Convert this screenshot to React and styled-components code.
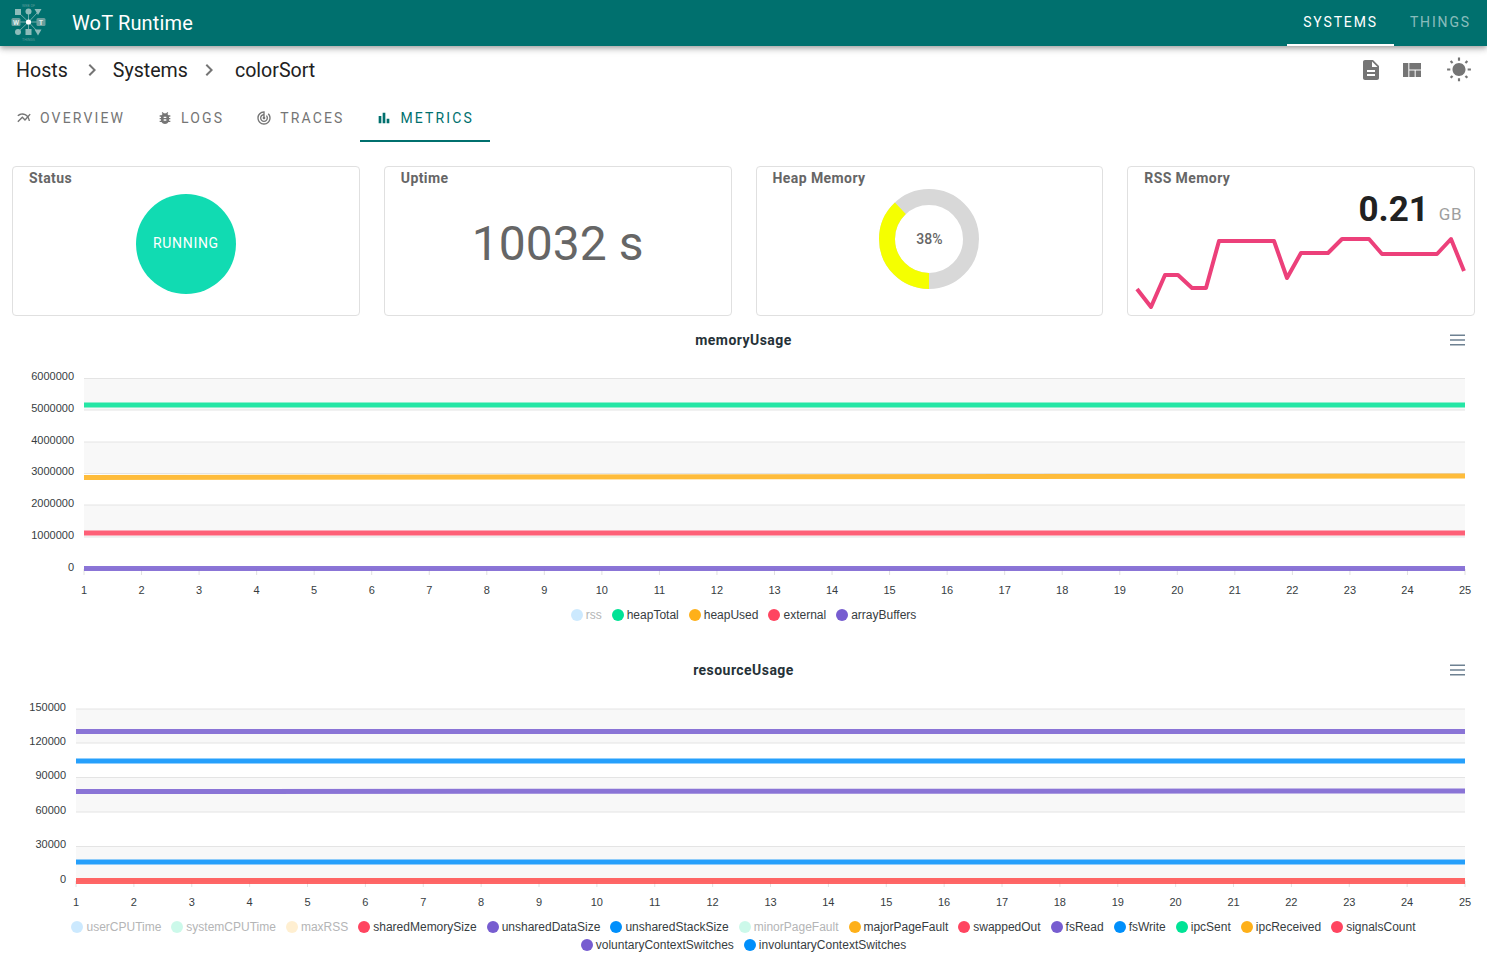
import React from 'react';
import styled, { createGlobalStyle } from 'styled-components';
import {
  MdBarChart,
  MdBugReport,
  MdChevronRight,
  MdDescription,
  MdMultilineChart,
  MdTrackChanges,
  MdViewQuilt,
  MdWbSunny,
} from 'react-icons/md';

const PURPLE = '#775DD0';
const BLUE = '#008FFB';
const GREEN = '#00E396';
const ORANGE = '#FEB019';
const RED = '#FF4560';

const memoryChart = {
  title: 'memoryUsage',
  top: 356,
  height: 246,
  left: 84,
  right: 1465,
  labelY: 594,
  grid: [
    { label: '6000000', y: 378.5 },
    { label: '5000000', y: 410 },
    { label: '4000000', y: 442 },
    { label: '3000000', y: 473.5 },
    { label: '2000000', y: 505 },
    { label: '1000000', y: 537 },
    { label: '0', y: 569 },
  ],
  series: [
    { color: GREEN, y1: 405, y2: 405 },
    { color: ORANGE, y1: 477.5, y2: 476 },
    { color: RED, y1: 533, y2: 533 },
    { color: PURPLE, y1: 568.5, y2: 568.5 },
  ],
  legend: [
    { name: 'rss', color: BLUE, off: true },
    { name: 'heapTotal', color: GREEN },
    { name: 'heapUsed', color: ORANGE },
    { name: 'external', color: RED },
    { name: 'arrayBuffers', color: PURPLE },
  ],
};

const resourceChart = {
  title: 'resourceUsage',
  top: 686,
  height: 228,
  left: 76,
  right: 1465,
  labelY: 906,
  grid: [
    { label: '150000', y: 709 },
    { label: '120000', y: 743 },
    { label: '90000', y: 777.5 },
    { label: '60000', y: 812 },
    { label: '30000', y: 846.5 },
    { label: '0', y: 881 },
  ],
  series: [
    { color: PURPLE, y1: 731.5, y2: 731.5 },
    { color: BLUE, y1: 761, y2: 761 },
    { color: PURPLE, y1: 791.5, y2: 791 },
    { color: BLUE, y1: 862, y2: 862 },
    { color: '#ff4b4b', y1: 881, y2: 881, width: 6 },
  ],
  legend: [
    { name: 'userCPUTime', color: BLUE, off: true },
    { name: 'systemCPUTime', color: GREEN, off: true },
    { name: 'maxRSS', color: ORANGE, off: true },
    { name: 'sharedMemorySize', color: RED },
    { name: 'unsharedDataSize', color: PURPLE },
    { name: 'unsharedStackSize', color: BLUE },
    { name: 'minorPageFault', color: GREEN, off: true },
    { name: 'majorPageFault', color: ORANGE },
    { name: 'swappedOut', color: RED },
    { name: 'fsRead', color: PURPLE },
    { name: 'fsWrite', color: BLUE },
    { name: 'ipcSent', color: GREEN },
    { name: 'ipcReceived', color: ORANGE },
    { name: 'signalsCount', color: RED },
    { name: 'voluntaryContextSwitches', color: PURPLE },
    { name: 'involuntaryContextSwitches', color: BLUE },
  ],
};

const sparkPoints = [
  [9, 122], [23, 140], [37, 108], [50, 108], [64, 121], [78, 121], [91, 74], [146, 74], [159, 111],
  [173, 86], [200, 86], [214, 72], [241, 72], [254, 87], [309, 87], [323, 72], [336, 104],
];

const Logo = () => (
  <svg width="60" height="46" viewBox="0 0 60 46">
    <g stroke="#8dbcba" strokeWidth="0.8">
      <line x1="28.5" y1="22" x2="18" y2="12" />
      <line x1="28.5" y1="22" x2="28.5" y2="12" />
      <line x1="28.5" y1="22" x2="38" y2="12" />
      <line x1="28.5" y1="22" x2="16" y2="22" />
      <line x1="28.5" y1="22" x2="41" y2="22" />
      <line x1="28.5" y1="22" x2="18" y2="32" />
      <line x1="28.5" y1="22" x2="28.5" y2="32" />
      <line x1="28.5" y1="22" x2="38" y2="32" />
    </g>
    <g fill="#8dbcba">
      <rect x="15" y="9" width="6" height="6" />
      <circle cx="28.5" cy="11.5" r="3" />
      <polygon points="34.5,9 41.5,9 38,15" />
      <circle cx="18" cy="32" r="3" />
      <rect x="25.5" y="29" width="6" height="6" />
      <polygon points="34.5,29.5 41.5,29.5 38,35.5" />
    </g>
    <g fill="#6a9f9d">
      <rect x="11.5" y="18" width="9" height="8" rx="1.5" />
      <rect x="36.5" y="18" width="9" height="8" rx="1.5" />
    </g>
    <circle cx="28.5" cy="22" r="2.6" fill="#ffffff" />
    <g textAnchor="middle" fontFamily="Roboto, sans-serif">
      <text x="28.5" y="6.5" fontSize="3.6" fill="#5d9c9a">WEB OF</text>
      <text x="28.5" y="40.5" fontSize="3.6" fill="#5d9c9a">THINGS</text>
      <text x="16" y="24.5" fontSize="7" fontWeight="700" fill="#dfeeed">W</text>
      <text x="41" y="24.5" fontSize="7" fontWeight="700" fill="#dfeeed">T</text>
    </g>
  </svg>
);

const Donut = ({ percent }) => {
  const r = 42;
  const circumference = 2 * Math.PI * r;
  const used = (circumference * percent) / 100;
  return (
    <DonutBox>
      <svg width="100" height="100" viewBox="0 0 100 100">
        <circle cx="50" cy="50" r={r} fill="none" stroke="#d8d8d8" strokeWidth="16" />
        <circle
          cx="50"
          cy="50"
          r={r}
          fill="none"
          stroke="#f5ff00"
          strokeWidth="16"
          strokeDasharray={`${used} ${circumference - used}`}
          transform="rotate(90 50 50)"
        />
      </svg>
      <DonutText>{percent}%</DonutText>
    </DonutBox>
  );
};

const Chart = ({ config }) => {
  const { title, top, height, left, right, labelY, grid, series, legend } = config;
  const base = grid[grid.length - 1].y;
  const ticks = Array.from({ length: 25 }, (_, i) => left + ((right - left) * i) / 24);
  return (
    <ChartBlock>
      <ChartHeader>
        <ChartTitle>{title}</ChartTitle>
        <ChartMenu width="15" height="12" viewBox="0 0 15 12">
          <path d="M0 1.25h15M0 6h15M0 10.75h15" stroke="#6e8192" strokeWidth="1.6" />
        </ChartMenu>
      </ChartHeader>
      <ChartSvg width="1487" height={height} viewBox={`0 ${top} 1487 ${height}`}>
        {grid.slice(0, -1).map((g, i) =>
          i % 2 === 0 ? (
            <rect key={g.label} x={left} y={g.y} width={right - left} height={grid[i + 1].y - g.y} fill="#f8f8f8" />
          ) : null
        )}
        {grid.map((g) => (
          <g key={g.label}>
            <line x1={left} x2={right} y1={g.y} y2={g.y} stroke="#e4e4e4" />
            <AxisText x={left - 10} y={Math.floor(g.y + 2)} textAnchor="end">{g.label}</AxisText>
          </g>
        ))}
        {ticks.map((x, i) => (
          <g key={x}>
            <line x1={x} x2={x} y1={base} y2={base + 6} stroke="#e0e0e0" />
            <AxisText x={x} y={labelY} textAnchor="middle">{i + 1}</AxisText>
          </g>
        ))}
        {series.map((s) => (
          <line
            key={s.y1}
            x1={left}
            x2={right}
            y1={s.y1}
            y2={s.y2}
            stroke={s.color}
            strokeOpacity="0.85"
            strokeWidth={s.width || 5}
          />
        ))}
      </ChartSvg>
      <Legend>
        {legend.map((item) => (
          <LegendItem key={item.name} $off={item.off}>
            <Marker $color={item.color} $off={item.off} />
            {item.name}
          </LegendItem>
        ))}
      </Legend>
    </ChartBlock>
  );
};

const App = () => {
  return (
    <Page>
      <GlobalStyle />
      <AppBar>
        <Brand>
          <Logo />
          <BrandName>WoT Runtime</BrandName>
        </Brand>
        <NavTabs>
          <NavTab $active>SYSTEMS</NavTab>
          <NavTab>THINGS</NavTab>
        </NavTabs>
      </AppBar>

      <CrumbRow>
        <Crumbs>
          <Crumb>Hosts</Crumb>
          <CrumbSep $left={12} $right={9}><MdChevronRight size={24} /></CrumbSep>
          <Crumb>Systems</Crumb>
          <CrumbSep $left={9} $right={14}><MdChevronRight size={24} /></CrumbSep>
          <Crumb>colorSort</Crumb>
        </Crumbs>
        <Actions>
          <MdDescription size={24} />
          <MdViewQuilt size={24} />
          <MdWbSunny size={26} />
        </Actions>
      </CrumbRow>

      <Tabs>
        <Tab><MdMultilineChart size={16} />OVERVIEW</Tab>
        <Tab><MdBugReport size={16} />LOGS</Tab>
        <Tab><MdTrackChanges size={16} />TRACES</Tab>
        <Tab $active><MdBarChart size={16} />METRICS</Tab>
      </Tabs>

      <Cards>
        <Card>
          <CardTitle>Status</CardTitle>
          <CardBody $top={5}>
            <StatusCircle>RUNNING</StatusCircle>
          </CardBody>
        </Card>
        <Card>
          <CardTitle>Uptime</CardTitle>
          <CardBody $top={27}>
            <Uptime>10032 s</Uptime>
          </CardBody>
        </Card>
        <Card>
          <CardTitle>Heap Memory</CardTitle>
          <CardBody $top={0}>
            <Donut percent={38} />
          </CardBody>
        </Card>
        <Card>
          <CardTitle>RSS Memory</CardTitle>
          <RssValue>
            <RssNumber>0.21</RssNumber>
            <RssUnit>GB</RssUnit>
          </RssValue>
          <Spark width="346" height="84" viewBox="0 66 346 84">
            <polyline
              points={sparkPoints.map((p) => p.join(',')).join(' ')}
              fill="none"
              stroke="#ec407a"
              strokeWidth="4"
              strokeLinejoin="round"
            />
          </Spark>
        </Card>
      </Cards>

      <Chart config={memoryChart} />
      <Chart config={resourceChart} />
    </Page>
  );
};

export default App;

const GlobalStyle = createGlobalStyle`
  html, body {
    margin: 0;
    padding: 0;
    background: #ffffff;
    overflow: hidden;
  }
  * {
    box-sizing: border-box;
  }
`;

const Page = styled.div`
  width: 1487px;
  height: 974px;
  overflow: hidden;
  font-family: Roboto, "Liberation Sans", sans-serif;
  color: #212121;
`;

const AppBar = styled.header`
  height: 46px;
  background: #00706e;
  display: flex;
  justify-content: space-between;
  box-shadow: 0 2px 4px -1px rgba(0, 0, 0, 0.2), 0 4px 5px 0 rgba(0, 0, 0, 0.14), 0 1px 10px 0 rgba(0, 0, 0, 0.12);
`;

const Brand = styled.div`
  display: flex;
  align-items: center;
`;

const BrandName = styled.div`
  font-size: 20px;
  letter-spacing: 0.15px;
  color: #ffffff;
  margin-left: 12px;
`;

const NavTabs = styled.nav`
  display: flex;
`;

const NavTab = styled.div`
  display: flex;
  align-items: center;
  padding: 0 16px;
  font-size: 14px;
  letter-spacing: 1.85px;
  color: ${(p) => (p.$active ? '#ffffff' : 'rgba(255, 255, 255, 0.55)')};
  border-bottom: 2px solid ${(p) => (p.$active ? '#ffffff' : 'transparent')};
`;

const CrumbRow = styled.div`
  height: 48px;
  display: flex;
  align-items: center;
  justify-content: space-between;
  padding: 0 15px 0 16px;
`;

const Crumbs = styled.div`
  display: flex;
  align-items: center;
`;

const Crumb = styled.span`
  font-size: 19.6px;
  color: #212121;
`;

const CrumbSep = styled.span`
  display: flex;
  color: #757575;
  margin-left: ${(p) => p.$left}px;
  margin-right: ${(p) => p.$right}px;
`;

const Actions = styled.div`
  display: flex;
  align-items: center;
  gap: 17px;
  color: #757575;
  svg:last-child {
    margin-left: 5px;
  }
`;

const Tabs = styled.div`
  height: 48px;
  display: flex;
`;

const Tab = styled.div`
  display: flex;
  align-items: center;
  gap: 8px;
  padding: 2px 16px 0;
  font-size: 14px;
  letter-spacing: 2.14px;
  color: ${(p) => (p.$active ? '#00706e' : '#757575')};
  border-bottom: 2px solid ${(p) => (p.$active ? '#00706e' : 'transparent')};
`;

const Cards = styled.div`
  display: grid;
  grid-template-columns: repeat(4, 1fr);
  gap: 24px;
  padding: 24px 12px 0;
`;

const Card = styled.div`
  height: 150px;
  border: 1px solid #e0e0e0;
  border-radius: 4px;
  overflow: hidden;
`;

const CardTitle = styled.div`
  height: 22px;
  padding: 3px 16px 0;
  font-size: 14px;
  font-weight: 700;
  letter-spacing: 0.42px;
  line-height: 16px;
  color: #666666;
`;

const CardBody = styled.div`
  display: flex;
  justify-content: center;
  padding-top: ${(p) => p.$top}px;
`;

const StatusCircle = styled.div`
  width: 100px;
  height: 100px;
  padding-bottom: 2px;
  border-radius: 50%;
  background: #11dbb2;
  color: #ffffff;
  font-size: 14px;
  letter-spacing: 0.7px;
  display: flex;
  align-items: center;
  justify-content: center;
`;

const Uptime = styled.div`
  font-size: 48px;
  line-height: 56px;
  color: #666666;
`;

const DonutBox = styled.div`
  position: relative;
  width: 100px;
  height: 100px;
`;

const DonutText = styled.div`
  position: absolute;
  inset: 0;
  display: flex;
  align-items: center;
  justify-content: center;
  font-size: 14px;
  font-weight: 500;
  color: #666666;
`;

const RssValue = styled.div`
  display: flex;
  justify-content: flex-end;
  align-items: baseline;
  gap: 10px;
  padding-right: 12px;
  height: 44px;
`;

const RssNumber = styled.span`
  font-size: 35px;
  line-height: 42px;
  font-weight: 700;
  color: #212121;
`;

const RssUnit = styled.span`
  position: relative;
  top: -1px;
  font-size: 17px;
  letter-spacing: 0.5px;
  color: #9e9e9e;
`;

const Spark = styled.svg`
  display: block;
`;

const ChartBlock = styled.section`
  width: 1487px;
`;

const ChartHeader = styled.div`
  position: relative;
  height: 32px;
  margin-top: 8px;
  display: flex;
  align-items: center;
  justify-content: center;
`;

const ChartTitle = styled.div`
  font-size: 14px;
  font-weight: 700;
  letter-spacing: 0.45px;
  color: #263238;
`;

const ChartMenu = styled.svg`
  position: absolute;
  right: 22px;
  top: 10px;
`;

const ChartSvg = styled.svg`
  display: block;
`;

const AxisText = styled.text`
  font-family: "Liberation Sans", Arial, sans-serif;
  font-size: 11px;
  fill: #373d3f;
`;

const Legend = styled.div`
  width: 1400px;
  margin: 4px auto 30px;
  display: flex;
  flex-wrap: wrap;
  justify-content: center;
  column-gap: 10px;
  font-family: "Liberation Sans", Arial, sans-serif;
  font-size: 12px;
  color: #373d3f;
`;

const LegendItem = styled.div`
  display: flex;
  align-items: center;
  gap: 3px;
  height: 18px;
  color: ${(p) => (p.$off ? '#b4b5b6' : '#373d3f')};
`;

const Marker = styled.span`
  width: 12px;
  height: 12px;
  border-radius: 50%;
  background: ${(p) => p.$color};
  opacity: ${(p) => (p.$off ? 0.2 : 1)};
`;
